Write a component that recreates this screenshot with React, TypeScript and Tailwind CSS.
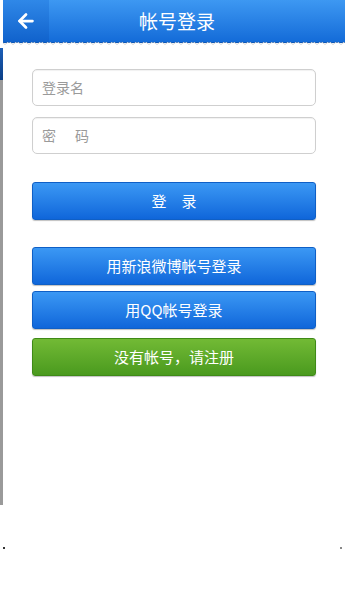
import { ArrowLeft } from "lucide-react";

const font = { fontFamily: '"Noto Sans CJK SC", "Noto Sans", sans-serif' };

function BlueButton({ label }: { label: string }) {
  return (
    <button className="h-[38px] w-full rounded-[3px] border border-[#0f5fc6] bg-gradient-to-b from-[#3b98f4] to-[#0f66da] text-[15px] text-white shadow-[0_1px_1px_rgba(0,0,0,0.25)]">
      {label}
    </button>
  );
}

export default function App() {
  return (
    <div className="relative flex h-[607px] w-[345px] flex-col overflow-hidden bg-white" style={font}>
      <div className="flex">
        {/* left edge strip */}
        <div className="flex w-[3px] flex-col">
          <div className="h-[48px] bg-white" />
          <div className="h-[32px] bg-gradient-to-b from-[#1c5fb8] to-[#0b3f86]" />
          <div className="h-[425px] bg-[#9a9a9a]" />
        </div>

        <div className="flex flex-1 flex-col">
          {/* header */}
          <div className="flex h-[42px] items-center bg-gradient-to-b from-[#3d98f2] to-[#136bd8] shadow-[0_1px_0_#0d58b8]">
            <div className="flex h-full w-[46px] items-center justify-center bg-gradient-to-b from-[#2f88e8] to-[#1062cc]">
              <ArrowLeft className="h-[22px] w-[22px] text-white" strokeWidth={3} />
            </div>
            <div className="flex-1 pr-[40px] text-center text-[19px] text-white">帐号登录</div>
          </div>
          <svg className="h-[5px] w-full" preserveAspectRatio="none">
            <defs>
              <pattern id="wave" width="8" height="5" patternUnits="userSpaceOnUse">
                <path d="M0 1 Q2 4 4 1 T8 1" fill="none" stroke="#d6d6d6" strokeWidth="1" />
              </pattern>
            </defs>
            <rect width="100%" height="5" fill="url(#wave)" />
          </svg>

          {/* form */}
          <div className="flex flex-col px-[29px] pt-[22px]">
            <div className="flex h-[37px] items-center rounded-[5px] border border-[#cfcfcf] bg-white px-[9px] text-[14px] text-[#9a9a9a] shadow-[inset_0_1px_1px_rgba(0,0,0,0.06)]">
              登录名
            </div>
            <div className="mt-[11px] flex h-[37px] items-center rounded-[5px] border border-[#cfcfcf] bg-white px-[9px] text-[14px] text-[#9a9a9a] shadow-[inset_0_1px_1px_rgba(0,0,0,0.06)]">
              <span>密</span>
              <span className="ml-[19px]">码</span>
            </div>

            <div className="mt-[28px]">
              <BlueButton label="登　录" />
            </div>

            <div className="mt-[27px] flex flex-col gap-[6px]">
              <BlueButton label="用新浪微博帐号登录" />
              <BlueButton label="用QQ帐号登录" />
              <button className="mt-[3px] h-[38px] w-full rounded-[3px] border border-[#3f8a17] bg-gradient-to-b from-[#72ba35] to-[#4a9a1e] text-[15px] text-white shadow-[0_1px_1px_rgba(0,0,0,0.25)]">
                没有帐号，请注册
              </button>
            </div>
          </div>
        </div>
      </div>

      <div className="mt-[42px] flex justify-between px-[3px]">
        <span className="h-[2px] w-[2px] bg-[#333]" />
        <span className="h-[2px] w-[2px] bg-[#888]" />
      </div>
    </div>
  );
}
